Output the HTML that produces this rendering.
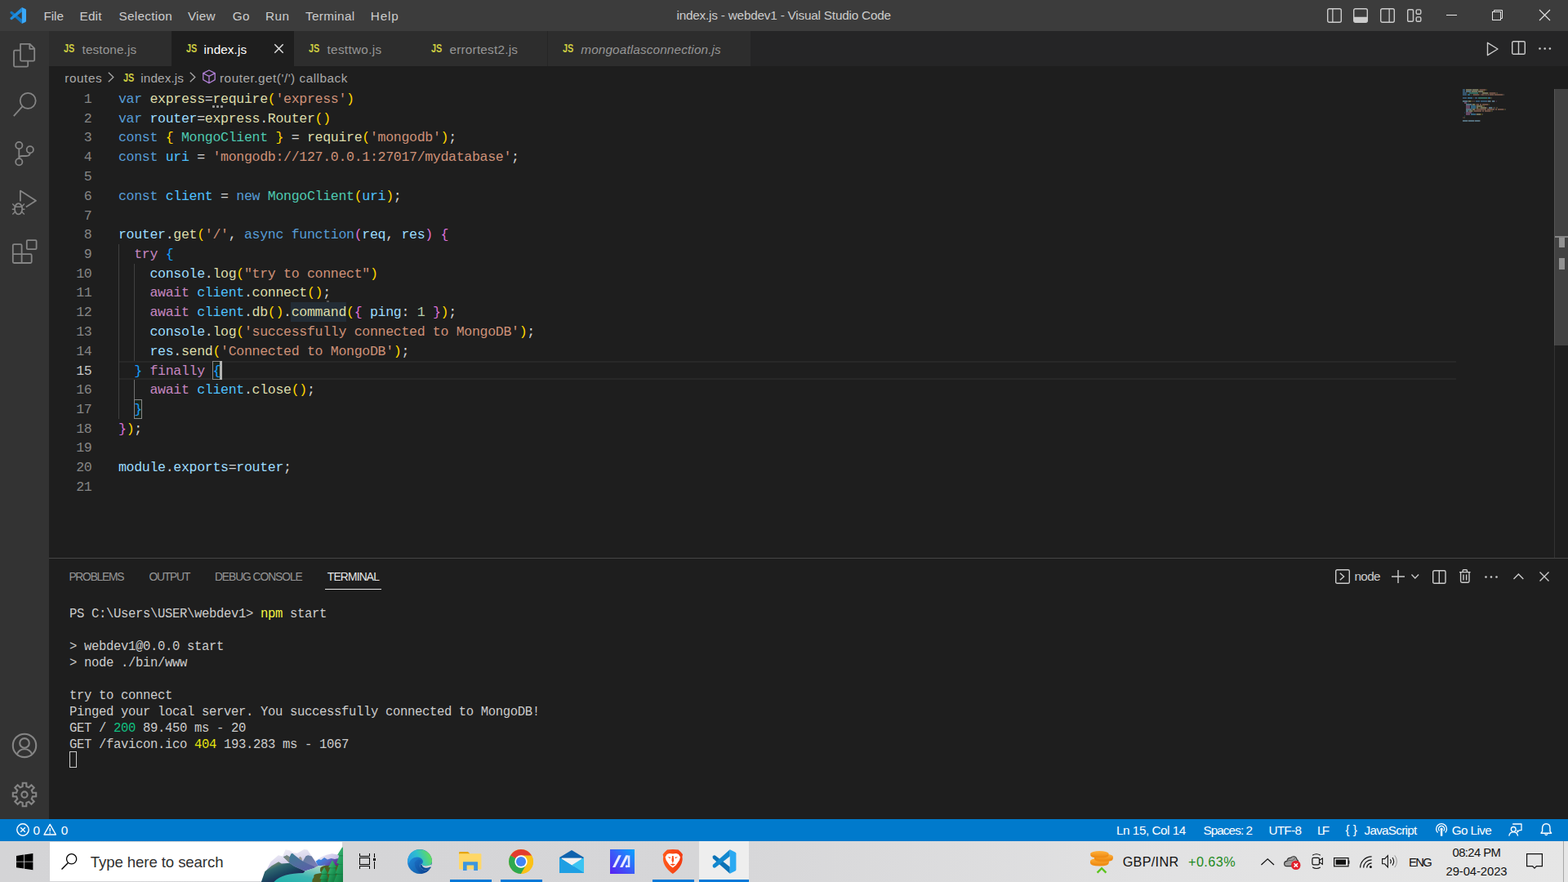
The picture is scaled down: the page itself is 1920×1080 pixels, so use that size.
<!DOCTYPE html>
<html lang="en">
<head>
<meta charset="utf-8">
<title>index.js - webdev1 - Visual Studio Code</title>
<style>
*{box-sizing:border-box;margin:0;padding:0}
html,body{width:1920px;height:1080px;overflow:hidden;background:#1e1e1e}
body{position:relative;font-family:"Liberation Sans",sans-serif;color:#ccc}
.abs{position:absolute}
.t{position:absolute;white-space:pre;display:block}
.js{font-size:14.2px;line-height:18px;font-weight:bold;color:#cbcb41;transform-origin:0 0}
svg{display:block;position:absolute;overflow:visible}
#titlebar{position:absolute;left:0;top:0;width:1920px;height:38px;background:#3c3c3c;color:#ccc}
#activity{position:absolute;left:0;top:38px;width:60px;height:965px;background:#333}
#tabs{position:absolute;left:0;top:0;width:1920px;height:81px;color:#969696}
#crumbs{position:absolute;left:0;top:0;width:1920px;height:109px;color:#a9a9a9}
#editor{position:absolute;left:0;top:0;width:1920px;height:684px}
.ln,.cl{position:absolute;height:24px;line-height:24px;font-family:"Liberation Mono",monospace;font-size:16.6px;letter-spacing:-0.337px;white-space:pre}
.ln{left:60px;width:52.4px;text-align:right;color:#858585}
.cl{left:145px;color:#d4d4d4}
.k{color:#569cd6}.c{color:#c586c0}.s{color:#ce9178}.v{color:#9cdcfe}.f{color:#dcdcaa}.y{color:#4ec9b0}.n{color:#b5cea8}.o{color:#4fc1ff}
.b1{color:#ffd700}.b2{color:#da70d6}.b3{color:#179fff}
#panel{position:absolute;left:0;top:0;width:1920px;height:1003px;color:#ccc}
.tl{position:absolute;left:85.1px;height:24px;line-height:24px;font-family:"Liberation Mono",monospace;font-size:15.6px;letter-spacing:-0.362px;color:#ccc;white-space:pre}
#status{position:absolute;left:0;top:1003px;width:1920px;height:27px;background:#007acc;color:#fff}
#taskbar{position:absolute;left:0;top:1030px;width:1920px;height:50px;background:linear-gradient(90deg,#d4d4d6 0,#d6d6d8 45%,#e2e2e3 75%,#e6e6e6 100%);color:#000}
</style>
</head>
<body>
<div id="editor">
<div class="abs" style="left:145px;top:442px;width:1638px;height:2px;background:#282828;"></div>
<div class="abs" style="left:145px;top:463px;width:1638px;height:2px;background:#282828;"></div>
<div class="abs" style="left:356px;top:370px;width:68px;height:24px;background:#232c35;"></div>
<div class="abs" style="left:400px;top:368px;width:3px;height:2px;background:#5a5a5a;"></div>
<div class="abs" style="left:145px;top:299px;width:1px;height:214px;background:#404040;"></div>
<div class="abs" style="left:164px;top:323px;width:1px;height:119px;background:#404040;"></div>
<div class="abs" style="left:164px;top:465px;width:1px;height:24px;background:#707070;"></div>
<div class="abs" style="left:260px;top:442px;width:12px;height:23px;background:#1b241b;border:1px solid #888;"></div>
<div class="abs" style="left:164px;top:489px;width:10px;height:24px;background:#1b241b;border:1px solid #888;"></div>
<div class="abs" style="left:269px;top:442px;width:3px;height:23px;background:#b4b4b2;"></div>
<div class="abs" style="left:260px;top:129px;width:3px;height:3px;background:#9c9c9c;border-radius:1px;"></div>
<div class="abs" style="left:265px;top:129px;width:3px;height:3px;background:#9c9c9c;border-radius:1px;"></div>
<div class="abs" style="left:270px;top:129px;width:3px;height:3px;background:#9c9c9c;border-radius:1px;"></div>
<div class="ln" style="top:110px">1</div>
<div class="cl" style="top:110px"><span class="k">var</span> <span class="f">express</span>=<span class="f">require</span><span class="b1">(</span><span class="s">'express'</span><span class="b1">)</span></div>
<div class="ln" style="top:134px">2</div>
<div class="cl" style="top:134px"><span class="k">var</span> <span class="v">router</span>=<span class="f">express</span>.<span class="f">Router</span><span class="b1">()</span></div>
<div class="ln" style="top:157px">3</div>
<div class="cl" style="top:157px"><span class="k">const</span> <span class="b1">{</span> <span class="y">MongoClient</span> <span class="b1">}</span> = <span class="f">require</span><span class="b1">(</span><span class="s">'mongodb'</span><span class="b1">)</span>;</div>
<div class="ln" style="top:181px">4</div>
<div class="cl" style="top:181px"><span class="k">const</span> <span class="o">uri</span> = <span class="s">'mongodb://127.0.0.1:27017/mydatabase'</span>;</div>
<div class="ln" style="top:205px">5</div>
<div class="ln" style="top:229px">6</div>
<div class="cl" style="top:229px"><span class="k">const</span> <span class="o">client</span> = <span class="k">new</span> <span class="y">MongoClient</span><span class="b1">(</span><span class="o">uri</span><span class="b1">)</span>;</div>
<div class="ln" style="top:253px">7</div>
<div class="ln" style="top:276px">8</div>
<div class="cl" style="top:276px"><span class="v">router</span>.<span class="f">get</span><span class="b1">(</span><span class="s">'/'</span>, <span class="k">async</span> <span class="k">function</span><span class="b2">(</span><span class="v">req</span>, <span class="v">res</span><span class="b2">)</span> <span class="b2">{</span></div>
<div class="ln" style="top:300px">9</div>
<div class="cl" style="top:300px">  <span class="c">try</span> <span class="b3">{</span></div>
<div class="ln" style="top:324px">10</div>
<div class="cl" style="top:324px">    <span class="v">console</span>.<span class="f">log</span><span class="b1">(</span><span class="s">"try to connect"</span><span class="b1">)</span></div>
<div class="ln" style="top:347px">11</div>
<div class="cl" style="top:347px">    <span class="c">await</span> <span class="o">client</span>.<span class="f">connect</span><span class="b1">()</span>;</div>
<div class="ln" style="top:371px">12</div>
<div class="cl" style="top:371px">    <span class="c">await</span> <span class="o">client</span>.<span class="f">db</span><span class="b1">()</span>.<span class="f">command</span><span class="b1">(</span><span class="b2">{</span> <span class="v">ping</span>: <span class="n">1</span> <span class="b2">}</span><span class="b1">)</span>;</div>
<div class="ln" style="top:395px">13</div>
<div class="cl" style="top:395px">    <span class="v">console</span>.<span class="f">log</span><span class="b1">(</span><span class="s">'successfully connected to MongoDB'</span><span class="b1">)</span>;</div>
<div class="ln" style="top:419px">14</div>
<div class="cl" style="top:419px">    <span class="v">res</span>.<span class="f">send</span><span class="b1">(</span><span class="s">'Connected to MongoDB'</span><span class="b1">)</span>;</div>
<div class="ln" style="top:443px;color:#c6c6c6">15</div>
<div class="cl" style="top:443px">  <span class="b3">}</span> <span class="c">finally</span> <span class="b3">{</span></div>
<div class="ln" style="top:466px">16</div>
<div class="cl" style="top:466px">    <span class="c">await</span> <span class="o">client</span>.<span class="f">close</span><span class="b1">()</span>;</div>
<div class="ln" style="top:490px">17</div>
<div class="cl" style="top:490px">  <span class="b3">}</span></div>
<div class="ln" style="top:514px">18</div>
<div class="cl" style="top:514px"><span class="b2">}</span><span class="b1">)</span>;</div>
<div class="ln" style="top:537px">19</div>
<div class="ln" style="top:561px">20</div>
<div class="cl" style="top:561px"><span class="v">module</span>.<span class="v">exports</span>=<span class="v">router</span>;</div>
<div class="ln" style="top:585px">21</div>
<svg style="left:1791px;top:109px;shape-rendering:crispEdges;" width="60" height="42" viewBox="0 0 60 42"><g opacity="0.42"><rect x="0" y="0" width="3" height="2" fill="#569cd6"/><rect x="4" y="0" width="7" height="2" fill="#dcdcaa"/><rect x="11" y="0" width="1" height="2" fill="#d4d4d4" opacity="0.4"/><rect x="12" y="0" width="7" height="2" fill="#dcdcaa"/><rect x="19" y="0" width="1" height="2" fill="#ffd700" opacity="0.4"/><rect x="20" y="0" width="1" height="2" fill="#ce9178" opacity="0.4"/><rect x="21" y="0" width="7" height="2" fill="#ce9178"/><rect x="28" y="0" width="1" height="2" fill="#ce9178" opacity="0.4"/><rect x="29" y="0" width="1" height="2" fill="#ffd700" opacity="0.4"/><rect x="0" y="2" width="3" height="2" fill="#569cd6"/><rect x="4" y="2" width="6" height="2" fill="#9cdcfe"/><rect x="10" y="2" width="1" height="2" fill="#d4d4d4" opacity="0.4"/><rect x="11" y="2" width="7" height="2" fill="#dcdcaa"/><rect x="18" y="2" width="1" height="2" fill="#d4d4d4" opacity="0.4"/><rect x="19" y="2" width="6" height="2" fill="#dcdcaa"/><rect x="25" y="2" width="2" height="2" fill="#ffd700" opacity="0.4"/><rect x="0" y="4" width="5" height="2" fill="#569cd6"/><rect x="6" y="4" width="1" height="2" fill="#ffd700" opacity="0.4"/><rect x="8" y="4" width="11" height="2" fill="#4ec9b0"/><rect x="20" y="4" width="1" height="2" fill="#ffd700" opacity="0.4"/><rect x="22" y="4" width="1" height="2" fill="#d4d4d4" opacity="0.4"/><rect x="24" y="4" width="7" height="2" fill="#dcdcaa"/><rect x="31" y="4" width="1" height="2" fill="#ffd700" opacity="0.4"/><rect x="32" y="4" width="1" height="2" fill="#ce9178" opacity="0.4"/><rect x="33" y="4" width="7" height="2" fill="#ce9178"/><rect x="40" y="4" width="1" height="2" fill="#ce9178" opacity="0.4"/><rect x="41" y="4" width="1" height="2" fill="#ffd700" opacity="0.4"/><rect x="42" y="4" width="1" height="2" fill="#d4d4d4" opacity="0.4"/><rect x="0" y="6" width="5" height="2" fill="#569cd6"/><rect x="6" y="6" width="3" height="2" fill="#4fc1ff"/><rect x="10" y="6" width="1" height="2" fill="#d4d4d4" opacity="0.4"/><rect x="12" y="6" width="1" height="2" fill="#ce9178" opacity="0.4"/><rect x="13" y="6" width="7" height="2" fill="#ce9178"/><rect x="20" y="6" width="3" height="2" fill="#ce9178" opacity="0.4"/><rect x="23" y="6" width="3" height="2" fill="#ce9178"/><rect x="26" y="6" width="1" height="2" fill="#ce9178" opacity="0.4"/><rect x="27" y="6" width="1" height="2" fill="#ce9178"/><rect x="28" y="6" width="1" height="2" fill="#ce9178" opacity="0.4"/><rect x="29" y="6" width="1" height="2" fill="#ce9178"/><rect x="30" y="6" width="1" height="2" fill="#ce9178" opacity="0.4"/><rect x="31" y="6" width="1" height="2" fill="#ce9178"/><rect x="32" y="6" width="1" height="2" fill="#ce9178" opacity="0.4"/><rect x="33" y="6" width="5" height="2" fill="#ce9178"/><rect x="38" y="6" width="1" height="2" fill="#ce9178" opacity="0.4"/><rect x="39" y="6" width="10" height="2" fill="#ce9178"/><rect x="49" y="6" width="1" height="2" fill="#ce9178" opacity="0.4"/><rect x="50" y="6" width="1" height="2" fill="#d4d4d4" opacity="0.4"/><rect x="0" y="10" width="5" height="2" fill="#569cd6"/><rect x="6" y="10" width="6" height="2" fill="#4fc1ff"/><rect x="13" y="10" width="1" height="2" fill="#d4d4d4" opacity="0.4"/><rect x="15" y="10" width="3" height="2" fill="#569cd6"/><rect x="19" y="10" width="11" height="2" fill="#4ec9b0"/><rect x="30" y="10" width="1" height="2" fill="#ffd700" opacity="0.4"/><rect x="31" y="10" width="3" height="2" fill="#4fc1ff"/><rect x="34" y="10" width="1" height="2" fill="#ffd700" opacity="0.4"/><rect x="35" y="10" width="1" height="2" fill="#d4d4d4" opacity="0.4"/><rect x="0" y="14" width="6" height="2" fill="#9cdcfe"/><rect x="6" y="14" width="1" height="2" fill="#d4d4d4" opacity="0.4"/><rect x="7" y="14" width="3" height="2" fill="#dcdcaa"/><rect x="10" y="14" width="1" height="2" fill="#ffd700" opacity="0.4"/><rect x="11" y="14" width="3" height="2" fill="#ce9178" opacity="0.4"/><rect x="14" y="14" width="1" height="2" fill="#d4d4d4" opacity="0.4"/><rect x="16" y="14" width="5" height="2" fill="#569cd6"/><rect x="22" y="14" width="8" height="2" fill="#569cd6"/><rect x="30" y="14" width="1" height="2" fill="#da70d6" opacity="0.4"/><rect x="31" y="14" width="3" height="2" fill="#9cdcfe"/><rect x="34" y="14" width="1" height="2" fill="#d4d4d4" opacity="0.4"/><rect x="36" y="14" width="3" height="2" fill="#9cdcfe"/><rect x="39" y="14" width="1" height="2" fill="#da70d6" opacity="0.4"/><rect x="41" y="14" width="1" height="2" fill="#da70d6" opacity="0.4"/><rect x="2" y="16" width="3" height="2" fill="#c586c0"/><rect x="6" y="16" width="1" height="2" fill="#179fff" opacity="0.4"/><rect x="4" y="18" width="7" height="2" fill="#9cdcfe"/><rect x="11" y="18" width="1" height="2" fill="#d4d4d4" opacity="0.4"/><rect x="12" y="18" width="3" height="2" fill="#dcdcaa"/><rect x="15" y="18" width="1" height="2" fill="#ffd700" opacity="0.4"/><rect x="16" y="18" width="1" height="2" fill="#ce9178" opacity="0.4"/><rect x="17" y="18" width="3" height="2" fill="#ce9178"/><rect x="21" y="18" width="2" height="2" fill="#ce9178"/><rect x="24" y="18" width="7" height="2" fill="#ce9178"/><rect x="31" y="18" width="1" height="2" fill="#ce9178" opacity="0.4"/><rect x="32" y="18" width="1" height="2" fill="#ffd700" opacity="0.4"/><rect x="4" y="20" width="5" height="2" fill="#c586c0"/><rect x="10" y="20" width="6" height="2" fill="#4fc1ff"/><rect x="16" y="20" width="1" height="2" fill="#d4d4d4" opacity="0.4"/><rect x="17" y="20" width="7" height="2" fill="#dcdcaa"/><rect x="24" y="20" width="2" height="2" fill="#ffd700" opacity="0.4"/><rect x="26" y="20" width="1" height="2" fill="#d4d4d4" opacity="0.4"/><rect x="4" y="22" width="5" height="2" fill="#c586c0"/><rect x="10" y="22" width="6" height="2" fill="#4fc1ff"/><rect x="16" y="22" width="1" height="2" fill="#d4d4d4" opacity="0.4"/><rect x="17" y="22" width="2" height="2" fill="#dcdcaa"/><rect x="19" y="22" width="2" height="2" fill="#ffd700" opacity="0.4"/><rect x="21" y="22" width="1" height="2" fill="#d4d4d4" opacity="0.4"/><rect x="22" y="22" width="7" height="2" fill="#dcdcaa"/><rect x="29" y="22" width="1" height="2" fill="#ffd700" opacity="0.4"/><rect x="30" y="22" width="1" height="2" fill="#da70d6" opacity="0.4"/><rect x="32" y="22" width="4" height="2" fill="#9cdcfe"/><rect x="36" y="22" width="1" height="2" fill="#d4d4d4" opacity="0.4"/><rect x="38" y="22" width="1" height="2" fill="#b5cea8"/><rect x="40" y="22" width="1" height="2" fill="#da70d6" opacity="0.4"/><rect x="41" y="22" width="1" height="2" fill="#ffd700" opacity="0.4"/><rect x="42" y="22" width="1" height="2" fill="#d4d4d4" opacity="0.4"/><rect x="4" y="24" width="7" height="2" fill="#9cdcfe"/><rect x="11" y="24" width="1" height="2" fill="#d4d4d4" opacity="0.4"/><rect x="12" y="24" width="3" height="2" fill="#dcdcaa"/><rect x="15" y="24" width="1" height="2" fill="#ffd700" opacity="0.4"/><rect x="16" y="24" width="1" height="2" fill="#ce9178" opacity="0.4"/><rect x="17" y="24" width="12" height="2" fill="#ce9178"/><rect x="30" y="24" width="9" height="2" fill="#ce9178"/><rect x="40" y="24" width="2" height="2" fill="#ce9178"/><rect x="43" y="24" width="7" height="2" fill="#ce9178"/><rect x="50" y="24" width="1" height="2" fill="#ce9178" opacity="0.4"/><rect x="51" y="24" width="1" height="2" fill="#ffd700" opacity="0.4"/><rect x="52" y="24" width="1" height="2" fill="#d4d4d4" opacity="0.4"/><rect x="4" y="26" width="3" height="2" fill="#9cdcfe"/><rect x="7" y="26" width="1" height="2" fill="#d4d4d4" opacity="0.4"/><rect x="8" y="26" width="4" height="2" fill="#dcdcaa"/><rect x="12" y="26" width="1" height="2" fill="#ffd700" opacity="0.4"/><rect x="13" y="26" width="1" height="2" fill="#ce9178" opacity="0.4"/><rect x="14" y="26" width="9" height="2" fill="#ce9178"/><rect x="24" y="26" width="2" height="2" fill="#ce9178"/><rect x="27" y="26" width="7" height="2" fill="#ce9178"/><rect x="34" y="26" width="1" height="2" fill="#ce9178" opacity="0.4"/><rect x="35" y="26" width="1" height="2" fill="#ffd700" opacity="0.4"/><rect x="36" y="26" width="1" height="2" fill="#d4d4d4" opacity="0.4"/><rect x="2" y="28" width="1" height="2" fill="#179fff" opacity="0.4"/><rect x="4" y="28" width="7" height="2" fill="#c586c0"/><rect x="12" y="28" width="1" height="2" fill="#179fff" opacity="0.4"/><rect x="4" y="30" width="5" height="2" fill="#c586c0"/><rect x="10" y="30" width="6" height="2" fill="#4fc1ff"/><rect x="16" y="30" width="1" height="2" fill="#d4d4d4" opacity="0.4"/><rect x="17" y="30" width="5" height="2" fill="#dcdcaa"/><rect x="22" y="30" width="2" height="2" fill="#ffd700" opacity="0.4"/><rect x="24" y="30" width="1" height="2" fill="#d4d4d4" opacity="0.4"/><rect x="2" y="32" width="1" height="2" fill="#179fff" opacity="0.4"/><rect x="0" y="34" width="1" height="2" fill="#da70d6" opacity="0.4"/><rect x="1" y="34" width="1" height="2" fill="#ffd700" opacity="0.4"/><rect x="2" y="34" width="1" height="2" fill="#d4d4d4" opacity="0.4"/><rect x="0" y="38" width="6" height="2" fill="#9cdcfe"/><rect x="6" y="38" width="1" height="2" fill="#d4d4d4" opacity="0.4"/><rect x="7" y="38" width="7" height="2" fill="#9cdcfe"/><rect x="14" y="38" width="1" height="2" fill="#d4d4d4" opacity="0.4"/><rect x="15" y="38" width="6" height="2" fill="#9cdcfe"/><rect x="21" y="38" width="1" height="2" fill="#d4d4d4" opacity="0.4"/></g></svg>
<div class="abs" style="left:1903px;top:109px;width:1px;height:575px;background:#333;"></div>
<div class="abs" style="left:1903px;top:109px;width:17px;height:314px;background:#424242;border-left:1px solid #555;"></div>
<div class="abs" style="left:1904px;top:289px;width:16px;height:2px;background:#868686;"></div>
<div class="abs" style="left:1909px;top:291px;width:7px;height:12px;background:#929292;"></div>
<div class="abs" style="left:1909px;top:316px;width:7px;height:14px;background:#929292;"></div>
</div>
<div id="tabs">
<div class="abs" style="left:60px;top:38px;width:1860px;height:43px;background:#252526;"></div>
<div class="abs" style="left:60px;top:38px;width:149.5px;height:43px;background:#2d2d2d;"></div>
<span class="t js" style="left:78.2px;top:50px;transform:scaleX(0.770)">JS</span>
<span class="t" style="left:100.5px;top:51px;font-size:15.3px;line-height:20px;letter-spacing:0.13px;color:#969696;">testone.js</span>
<div class="abs" style="left:210px;top:38px;width:149.5px;height:43px;background:#1e1e1e;"></div>
<span class="t js" style="left:228.2px;top:50px;transform:scaleX(0.770)">JS</span>
<span class="t" style="left:249.5px;top:51px;font-size:15.3px;line-height:20px;letter-spacing:0.11px;color:#fff;">index.js</span>
<div class="abs" style="left:360px;top:38px;width:149.5px;height:43px;background:#2d2d2d;"></div>
<span class="t js" style="left:378.2px;top:50px;transform:scaleX(0.770)">JS</span>
<span class="t" style="left:400.5px;top:51px;font-size:15.3px;line-height:20px;letter-spacing:0.32px;color:#969696;">testtwo.js</span>
<div class="abs" style="left:510px;top:38px;width:160px;height:43px;background:#2d2d2d;"></div>
<span class="t js" style="left:528.2px;top:50px;transform:scaleX(0.770)">JS</span>
<span class="t" style="left:550.5px;top:51px;font-size:15.3px;line-height:20px;letter-spacing:0.22px;color:#969696;">errortest2.js</span>
<div class="abs" style="left:671px;top:38px;width:248px;height:43px;background:#2d2d2d;"></div>
<span class="t js" style="left:689.2px;top:50px;transform:scaleX(0.770)">JS</span>
<span class="t" style="left:711.3px;top:51px;font-size:15.3px;line-height:20px;letter-spacing:0.14px;color:#969696;font-style:italic;">mongoatlasconnection.js</span>
<svg style="left:336px;top:54px;" width="11" height="11" viewBox="0 0 11 11"><path d="M0.3 0.3 L10.7 10.7 M10.7 0.3 L0.3 10.7" fill="none" stroke="#e0e0e0" stroke-width="1.5"/></svg>
<svg style="left:1819.5px;top:50.5px;" width="16" height="18" viewBox="0 0 16 18"><path d="M1.5 1.3 L14 9 L1.5 16.7 Z" fill="none" stroke="#ccc" stroke-width="1.4" stroke-linejoin="round"/></svg>
<svg style="left:1851px;top:50px;" width="17" height="17" viewBox="0 0 17 17"><rect x="0.7" y="0.7" width="15.6" height="15.6" rx="1.6" fill="none" stroke="#ccc" stroke-width="1.4"/><rect x="7.8" y="1" width="1.4" height="15" fill="#ccc"/></svg>
<svg style="left:1884px;top:58px;" width="16" height="3" viewBox="0 0 16 3"><circle cx="1.5" cy="1.5" r="1.3" fill="#ccc"/><circle cx="7.7" cy="1.5" r="1.3" fill="#ccc"/><circle cx="13.9" cy="1.5" r="1.3" fill="#ccc"/></svg>
</div>
<div id="crumbs">
<span class="t" style="left:79.3px;top:86px;font-size:15.3px;line-height:20px;letter-spacing:0.57px;color:#a9a9a9;">routes</span>
<svg style="left:131.8px;top:88.2px;" width="8" height="13" viewBox="0 0 8 13"><path d="M0.8 0.8 L6.8 6.5 L0.8 12.2" fill="none" stroke="#a9a9a9" stroke-width="1.3"/></svg>
<span class="t js" style="left:151.4px;top:86px;transform:scaleX(0.770)">JS</span>
<span class="t" style="left:172.3px;top:86px;font-size:15.3px;line-height:20px;letter-spacing:0.11px;color:#a9a9a9;">index.js</span>
<svg style="left:232.2px;top:88.2px;" width="8" height="13" viewBox="0 0 8 13"><path d="M0.8 0.8 L6.8 6.5 L0.8 12.2" fill="none" stroke="#a9a9a9" stroke-width="1.3"/></svg>
<svg style="left:248px;top:85px;" width="16" height="18" viewBox="0 0 16 18"><path d="M8 1 L15.2 4.6 V12.6 L8 16.8 L0.8 12.6 V4.6 Z M0.8 4.6 L8 8.4 L15.2 4.6 M8 8.4 V16.8" fill="none" stroke="#b180d7" stroke-width="1.3" stroke-linejoin="round"/></svg>
<span class="t" style="left:269px;top:86px;font-size:15.3px;line-height:20px;letter-spacing:0.52px;color:#a9a9a9;">router.get('/') callback</span>
</div>
<div id="panel">
<div class="abs" style="left:60px;top:683px;width:1860px;height:1px;background:#454545;"></div>
<span class="t" style="left:84.4px;top:698px;font-size:13.8px;line-height:18px;letter-spacing:-1.22px;color:#969696;">PROBLEMS</span>
<span class="t" style="left:182.5px;top:698px;font-size:13.8px;line-height:18px;letter-spacing:-1.18px;color:#969696;">OUTPUT</span>
<span class="t" style="left:262.9px;top:698px;font-size:13.8px;line-height:18px;letter-spacing:-1.04px;color:#969696;">DEBUG CONSOLE</span>
<span class="t" style="left:400.8px;top:698px;font-size:13.8px;line-height:18px;letter-spacing:-0.81px;color:#e7e7e7;">TERMINAL</span>
<div class="abs" style="left:398px;top:721px;width:69px;height:1px;background:#e7e7e7;"></div>
<svg style="left:1635px;top:697px;" width="18" height="18" viewBox="0 0 18 18"><rect x="0.7" y="0.7" width="16.6" height="16.6" rx="1.6" fill="none" stroke="#ccc" stroke-width="1.4"/><path d="M5.8 4.8 L10.6 9 L5.8 13.2" fill="none" stroke="#ccc" stroke-width="1.4"/></svg>
<span class="t" style="left:1658.4px;top:696px;font-size:15.3px;line-height:20px;letter-spacing:-0.64px;color:#ccc;">node</span>
<svg style="left:1704px;top:698px;" width="16" height="16" viewBox="0 0 16 16"><path d="M8 0 V16 M0 8 H16" fill="none" stroke="#ccc" stroke-width="1.4"/></svg>
<svg style="left:1727.8px;top:703px;" width="10" height="6" viewBox="0 0 10 6"><path d="M0.5 0.5 L4.8 5 L9.1 0.5" fill="none" stroke="#ccc" stroke-width="1.3"/></svg>
<svg style="left:1753.7px;top:697.5px;" width="17" height="17" viewBox="0 0 17 17"><rect x="0.7" y="0.7" width="15.3" height="15.6" rx="1.6" fill="none" stroke="#ccc" stroke-width="1.4"/><rect x="7.6" y="1" width="1.4" height="15" fill="#ccc"/></svg>
<svg style="left:1786.5px;top:697px;" width="14" height="17" viewBox="0 0 14 17"><path d="M0 3.6 H13.6 M4.2 3.4 V1.6 Q4.2 0.7 5.1 0.7 H8.5 Q9.4 0.7 9.4 1.6 V3.4 M1.6 4 V14.6 Q1.6 16.2 3.2 16.2 H10.4 Q12 16.2 12 14.6 V4 M5 6.5 V13.5 M8.6 6.5 V13.5" fill="none" stroke="#ccc" stroke-width="1.4"/></svg>
<svg style="left:1818.4px;top:704.5px;" width="16" height="3" viewBox="0 0 16 3"><circle cx="1.5" cy="1.5" r="1.3" fill="#ccc"/><circle cx="8" cy="1.5" r="1.3" fill="#ccc"/><circle cx="14.5" cy="1.5" r="1.3" fill="#ccc"/></svg>
<svg style="left:1852.5px;top:701.5px;" width="13" height="8" viewBox="0 0 13 8"><path d="M0.5 7 L6.4 1 L12.3 7" fill="none" stroke="#ccc" stroke-width="1.4"/></svg>
<svg style="left:1885.3px;top:700px;" width="12" height="12" viewBox="0 0 12 12"><path d="M0.5 0.5 L11.5 11.5 M11.5 0.5 L0.5 11.5" fill="none" stroke="#ccc" stroke-width="1.4"/></svg>
<div class="tl" style="top:740px">PS C:\Users\USER\webdev1&gt; <span style="color:#f5f543">npm</span> start</div>
<div class="tl" style="top:780px">&gt; webdev1@0.0.0 start</div>
<div class="tl" style="top:800px">&gt; node ./bin/www</div>
<div class="tl" style="top:840px">try to connect</div>
<div class="tl" style="top:860px">Pinged your local server. You successfully connected to MongoDB!</div>
<div class="tl" style="top:880px">GET / <span style="color:#11c081">200</span> 89.450 ms - 20</div>
<div class="tl" style="top:900px">GET /favicon.ico <span style="color:#e5e510">404</span> 193.283 ms - 1067</div>
<div class="abs" style="left:85px;top:920px;width:9px;height:20px;background:transparent;border:1px solid #ccc;"></div>
</div>
<div id="titlebar">
<svg style="left:12px;top:9px;" width="20" height="20" viewBox="0 0 100 100"><path d="M74 100 L74 72 L14 25 Q8 21 3.5 27 Q-0.5 33 4.5 38 Z" fill="#1276c4"/><path d="M74 0 L74 28 L14 75 Q8 79 3.5 73 Q-0.5 67 4.5 62 Z" fill="#1f8de0"/><path d="M74 0 L96 10.5 Q100 12.5 100 17 V83 Q100 87.5 96 89.5 L74 100 Z" fill="#3aa8f8"/></svg>
<span class="t" style="left:53.4px;top:10px;font-size:15.3px;line-height:20px;letter-spacing:-0.01px;">File</span>
<span class="t" style="left:97.5px;top:10px;font-size:15.3px;line-height:20px;letter-spacing:0.2px;">Edit</span>
<span class="t" style="left:145.6px;top:10px;font-size:15.3px;line-height:20px;letter-spacing:0.27px;">Selection</span>
<span class="t" style="left:230px;top:10px;font-size:15.3px;line-height:20px;letter-spacing:0.19px;">View</span>
<span class="t" style="left:284.8px;top:10px;font-size:15.3px;line-height:20px;letter-spacing:0.3px;">Go</span>
<span class="t" style="left:325px;top:10px;font-size:15.3px;line-height:20px;letter-spacing:0.47px;">Run</span>
<span class="t" style="left:374px;top:10px;font-size:15.3px;line-height:20px;letter-spacing:0.33px;">Terminal</span>
<span class="t" style="left:453.8px;top:10px;font-size:15.3px;line-height:20px;letter-spacing:0.82px;">Help</span>
<span class="t" style="left:828.5px;top:9px;font-size:15.3px;line-height:20px;letter-spacing:-0.2px;">index.js - webdev1 - Visual Studio Code</span>
<svg style="left:1625px;top:10px;" width="18" height="18" viewBox="0 0 18 18"><rect x="0.7" y="0.7" width="16.6" height="16.6" rx="2" fill="none" stroke="#ccc" stroke-width="1.4"/><rect x="6.2" y="1" width="1.3" height="16" fill="#ccc"/></svg>
<svg style="left:1657.3px;top:10px;" width="18" height="18" viewBox="0 0 18 18"><rect x="0.7" y="0.7" width="16.6" height="16.6" rx="2" fill="none" stroke="#ccc" stroke-width="1.4"/><path d="M1 10.8 H17 V15.5 Q17 17 15.5 17 H2.5 Q1 17 1 15.5 Z" fill="#ccc"/></svg>
<svg style="left:1690px;top:10px;" width="18" height="18" viewBox="0 0 18 18"><rect x="0.7" y="0.7" width="16.6" height="16.6" rx="2" fill="none" stroke="#ccc" stroke-width="1.4"/><rect x="10.5" y="1" width="1.3" height="16" fill="#ccc"/></svg>
<svg style="left:1723.2px;top:10px;" width="18" height="18" viewBox="0 0 18 18"><rect x="0.7" y="1.7" width="6.8" height="14.6" rx="1.4" fill="none" stroke="#ccc" stroke-width="1.4"/><rect x="11.2" y="1.9" width="5.6" height="5.4" rx="1.4" fill="none" stroke="#ccc" stroke-width="1.4"/><rect x="11.2" y="10.9" width="5.6" height="5.4" rx="1.4" fill="none" stroke="#ccc" stroke-width="1.4"/></svg>
<div class="abs" style="left:1771px;top:18px;width:13px;height:1px;background:#e6e6e6;"></div>
<svg style="left:1827px;top:12px;" width="14" height="14" viewBox="0 0 14 14"><rect x="0.5" y="2.5" width="10" height="10" fill="none" stroke="#e6e6e6" stroke-width="1"/><path d="M2.5 2.5 V0.5 H12.5 V10.5 H10.5" fill="none" stroke="#e6e6e6" stroke-width="1"/></svg>
<svg style="left:1885px;top:12px;" width="13" height="13" viewBox="0 0 13 13"><path d="M0 0 L13 13 M13 0 L0 13" fill="none" stroke="#e6e6e6" stroke-width="1.1"/></svg>
</div>
<div id="activity">
<svg style="left:0;top:-38px" width="60" height="1003" viewBox="0 0 60 1003" fill="none" stroke="#858585" stroke-width="1.8" stroke-linejoin="round" stroke-linecap="butt"><path d="M25 53.9 H36.6 L42.2 59.5 V73.2 Q42.2 74.7 40.7 74.7 H26.5 Q25 74.7 25 73.2 Z"/><path d="M36.3 54.2 V59.8 H41.9"/><path d="M25 61.7 H18.5 Q17 61.7 17 63.2 V80.2 Q17 81.7 18.5 81.7 H32.7 Q34.2 81.7 34.2 80.2 V75"/><circle cx="34.2" cy="123.3" r="9.5"/><path d="M27.6 130.2 L16.8 142.2"/><circle cx="23.3" cy="178" r="4.1"/><circle cx="23.3" cy="198.2" r="4.1"/><circle cx="36.8" cy="183.2" r="4.1"/><path d="M23.3 182.1 V194.1 M36.8 187.3 Q36.8 191 32 191 H27 Q23.3 191 23.3 194.1"/><path d="M24.9 246.5 V233.6 L44 245.8 L31.8 253.6"/><ellipse cx="22.6" cy="255.8" rx="4.6" ry="6.6"/><path d="M18.2 253.2 H27 M18 252.5 L15.3 249.6 M27.2 252.5 L29.9 249.6 M18 256.3 H14.8 M27.2 256.3 H30.4 M18.4 259.6 L15.3 262.6 M26.8 259.6 L29.9 262.6" stroke-width="1.4"/><path d="M15.8 300.6 Q15.8 299.1 17.3 299.1 H25.1 Q26.6 299.1 26.6 300.6 V311.2 H37.2 Q38.7 311.2 38.7 312.7 V320.5 Q38.7 322 37.2 322 H17.3 Q15.8 322 15.8 320.5 Z"/><path d="M15.8 311.2 H26.6 V322"/><rect x="32.8" y="294.1" width="11.8" height="11" rx="1.2"/><g stroke-width="2.1"><circle cx="30" cy="912.9" r="14.2"/><circle cx="30" cy="909.9" r="5.8"/><path d="M20.9 923.4 Q23.5 917.2 30 917.2 Q36.5 917.2 39.1 923.4"/></g><path d="M27.6 963.1 L27.7 958.8 L32.3 958.8 L32.4 963.1 L35.3 964.3 L38.4 961.3 L41.7 964.6 L38.7 967.7 L39.9 970.6 L44.2 970.7 L44.2 975.3 L39.9 975.4 L38.7 978.3 L41.7 981.4 L38.4 984.7 L35.3 981.7 L32.4 982.9 L32.3 987.2 L27.7 987.2 L27.6 982.9 L24.7 981.7 L21.6 984.7 L18.3 981.4 L21.3 978.3 L20.1 975.4 L15.8 975.3 L15.8 970.7 L20.1 970.6 L21.3 967.7 L18.3 964.6 L21.6 961.3 L24.7 964.3 Z" stroke-linejoin="miter" stroke-width="2.1"/><circle cx="30" cy="973" r="3.6" stroke-width="2.1"/></svg>
</div>
<div id="status">
<svg style="left:19.8px;top:5px;" width="16" height="16" viewBox="0 0 16 16"><circle cx="8" cy="8" r="7.2" fill="none" stroke="#fff" stroke-width="1.4"/><path d="M5.2 5.2 L10.8 10.8 M10.8 5.2 L5.2 10.8" stroke="#fff" stroke-width="1.4" fill="none"/></svg>
<span class="t" style="left:40.6px;top:4px;font-size:15.3px;line-height:20px;color:#fff;">0</span>
<svg style="left:53.3px;top:5px;" width="17" height="15" viewBox="0 0 17 15"><path d="M8.2 1.4 L15.4 14 H1 Z" fill="none" stroke="#fff" stroke-width="1.4" stroke-linejoin="round"/><path d="M8.2 6 V10.2 M8.2 11.3 V12.7" stroke="#fff" stroke-width="1.3"/></svg>
<span class="t" style="left:74.8px;top:4px;font-size:15.3px;line-height:20px;color:#fff;">0</span>
<span class="t" style="left:1367px;top:4px;font-size:15.3px;line-height:20px;letter-spacing:-0.47px;color:#fff;">Ln 15, Col 14</span>
<span class="t" style="left:1473.4px;top:4px;font-size:15.3px;line-height:20px;letter-spacing:-0.92px;color:#fff;">Spaces: 2</span>
<span class="t" style="left:1553.4px;top:4px;font-size:15.3px;line-height:20px;letter-spacing:-0.71px;color:#fff;">UTF-8</span>
<span class="t" style="left:1613px;top:4px;font-size:15.3px;line-height:20px;letter-spacing:-2.71px;color:#fff;">LF</span>
<span class="t" style="left:1670.5px;top:4px;font-size:15.3px;line-height:20px;letter-spacing:-0.74px;color:#fff;">JavaScript</span>
<span class="t" style="left:1777.7px;top:4px;font-size:15.3px;line-height:20px;letter-spacing:-0.59px;color:#fff;">Go Live</span>
<span class="t" style="left:1647.6px;top:3px;font-size:15.3px;line-height:20px;letter-spacing:4.09px;color:#fff;">{}</span>
<svg style="left:1757.7px;top:5.1px;" width="15" height="16" viewBox="0 0 15 16"><path d="M2.57 11.53 A6.4 6.4 0 1 1 11.63 11.53 M4.55 9.55 A3.6 3.6 0 1 1 9.65 9.55" fill="none" stroke="#fff" stroke-width="1.3"/><circle cx="7.1" cy="7" r="1.6" fill="#fff"/><rect x="5.9" y="7" width="2.4" height="8.7" fill="#fff"/></svg>
<svg style="left:1847.2px;top:5.3px;" width="17" height="16" viewBox="0 0 17 16"><path d="M5.2 1 H16 V8.6 H13.4 L11 11 V8.6" fill="none" stroke="#fff" stroke-width="1.3" stroke-linejoin="round"/><circle cx="6.2" cy="7.4" r="2.9" fill="none" stroke="#fff" stroke-width="1.3"/><path d="M0.8 15.6 Q1.4 10.8 6.2 10.8 Q11 10.8 11.6 15.6" fill="none" stroke="#fff" stroke-width="1.3"/></svg>
<svg style="left:1885.6px;top:5.3px;" width="15" height="16" viewBox="0 0 15 16"><path d="M1 12.2 H13.6 L12 9.8 V6.2 Q12 0.8 7.3 0.8 Q2.6 0.8 2.6 6.2 V9.8 Z" fill="none" stroke="#fff" stroke-width="1.4" stroke-linejoin="round"/><path d="M5.6 13.4 Q7.3 15.6 9 13.4" fill="none" stroke="#fff" stroke-width="1.3"/></svg>
</div>
<div id="taskbar">
<div class="abs" style="left:856px;top:0px;width:61px;height:50px;background:#eeeeee;"></div>
<svg style="left:19.8px;top:15px;" width="20.4" height="20.2" viewBox="0 0 20.4 20.2"><path d="M0 2.9 L9.2 1.6 V9.7 H0 Z M10 1.5 L20.4 0 V9.7 H10 Z M0 10.4 H9.2 V18.6 L0 17.3 Z M10 10.4 H20.4 V20.2 L10 18.7 Z" fill="#000"/></svg>
<div id="search" class="abs" style="left:61px;top:1px;width:358px;height:48px;background:#fff;overflow:hidden">
</div>
<svg style="left:75.3px;top:15px;" width="20" height="20" viewBox="0 0 20 20"><circle cx="12.6" cy="6.8" r="6.1" fill="none" stroke="#000" stroke-width="1.3"/><path d="M8.4 11.4 L0.5 19.6" stroke="#000" stroke-width="1.4" fill="none"/></svg>
<span class="t" style="left:110.8px;top:14px;font-size:18.6px;line-height:24px;letter-spacing:-0.09px;color:#303030;">Type here to search</span>
<svg style="left:316px;top:2px;clip-path:inset(0 2px 0 0)" width="106" height="48" viewBox="0 0 1920 869"><defs>
<linearGradient id="gsnow" x1="0.2" y1="0" x2="0.7" y2="1"><stop offset="0" stop-color="#f3f1f6"/><stop offset="0.45" stop-color="#dcd9ee"/><stop offset="1" stop-color="#a9a3da"/></linearGradient>
<linearGradient id="gsnow2" x1="0" y1="0" x2="1" y2="0.3"><stop offset="0" stop-color="#f6f4fa"/><stop offset="1" stop-color="#c4bee6"/></linearGradient>
<linearGradient id="gmid" x1="0.1" y1="0" x2="0.9" y2="1"><stop offset="0" stop-color="#3a7f92"/><stop offset="0.5" stop-color="#4f6f9e"/><stop offset="1" stop-color="#5b5ca8"/></linearGradient>
<linearGradient id="gmid2" x1="0" y1="0" x2="0.6" y2="1"><stop offset="0" stop-color="#5f7c99"/><stop offset="1" stop-color="#7b7db8"/></linearGradient>
<linearGradient id="gfront" x1="0.15" y1="0.1" x2="0.75" y2="0.8"><stop offset="0" stop-color="#8b946e"/><stop offset="0.3" stop-color="#2f6670"/><stop offset="0.6" stop-color="#1c4a62"/><stop offset="1" stop-color="#1d1d50"/></linearGradient>
<linearGradient id="glake" x1="0.1" y1="1" x2="0.9" y2="0"><stop offset="0" stop-color="#1fb1ab"/><stop offset="0.45" stop-color="#3cb5b2"/><stop offset="1" stop-color="#b5dcc8"/></linearGradient>
<linearGradient id="gfar" x1="0" y1="0" x2="1" y2="0.4"><stop offset="0" stop-color="#2b97f5"/><stop offset="0.6" stop-color="#5568c0"/><stop offset="1" stop-color="#6a2790"/></linearGradient>
<linearGradient id="gtree" x1="0" y1="0" x2="1" y2="1"><stop offset="0" stop-color="#4fc285"/><stop offset="0.5" stop-color="#1f9a58"/><stop offset="1" stop-color="#0a6a34"/></linearGradient>
</defs>
<path d="M170 640 L280 420 L450 275 L545 300 L610 150 L700 168 L770 215 L870 232 L1020 143 L1095 152 L1175 275 L1265 405 L1330 505 L900 640 Z" fill="url(#gsnow)"/>
<path d="M1265 405 L1400 318 L1520 268 L1640 238 L1765 262 L1810 310 V420 H1280 Z" fill="url(#gsnow2)"/>
<path d="M1280 412 L1345 368 L1400 382 L1470 328 L1540 372 L1620 345 L1700 362 L1780 345 L1820 360 V510 H1330 Z" fill="url(#gfar)"/>
<path d="M1000 400 L1060 292 L1110 274 L1190 300 L1270 420 L1335 512 L1240 565 L1000 520 Z" fill="url(#gmid2)"/>
<path d="M560 312 L640 274 L700 310 L735 240 L765 235 L830 290 L900 345 L1000 410 L1120 470 L1260 530 L1240 565 L1040 625 L800 520 L690 440 Z" fill="url(#gmid)"/>
<path d="M560 312 L640 274 L700 310 L690 440 Z" fill="#8a8a78" opacity="0.75"/>
<path d="M900 345 L930 305 L965 330 L980 395 Z" fill="#8f8a7a" opacity="0.8"/>
<path d="M300 869 L560 690 L1000 640 L1060 620 L1240 562 L1335 510 L1490 500 L1420 869 Z" fill="url(#glake)"/>
<path d="M70 869 L150 640 L300 512 L455 420 L520 462 L590 456 L700 450 L800 520 L1045 628 L1000 672 C 700 682 500 720 350 869 Z" fill="url(#gfront)"/>
<path d="M1380 560 Q1400 520 1480 505 L1820 500 V869 H1200 Q1200 800 1240 760 Q1220 700 1300 690 L1400 670 Q1360 620 1380 560 Z" fill="#4f5f22"/>
<path d="M1470 545 L1545 680 L1515 685 L1555 800 L1520 805 L1545 869 H1385 L1405 805 L1365 800 L1420 685 L1385 680 Z" fill="url(#gtree)"/><path d="M1385 680 Q1470 700 1545 680 L1515 700 H1420 Z M1365 800 Q1460 825 1555 800 L1520 820 H1400 Z" fill="#0a5a2c" opacity="0.6"/>
<path d="M1650 385 L1740 545 L1705 550 L1755 690 L1715 695 L1760 869 H1545 L1585 695 L1545 690 L1600 550 L1560 545 Z" fill="url(#gtree)"/><path d="M1560 545 Q1650 570 1740 545 L1705 565 H1600 Z M1545 690 Q1650 715 1755 690 L1715 712 H1585 Z" fill="#0a5a2c" opacity="0.6"/>
<path d="M1870 90 L1960 270 L1930 275 L1990 460 L1950 465 L2000 680 L1960 685 L2000 869 H1680 L1750 685 L1715 680 L1790 465 L1740 455 L1800 275 L1760 265 Z" fill="url(#gtree)"/><path d="M1760 265 Q1860 295 1960 270 L1930 292 H1800 Z M1740 455 Q1860 490 1990 460 L1950 482 H1790 Z M1715 680 Q1860 710 2000 680 L1960 702 H1750 Z" fill="#0a5a2c" opacity="0.6"/></svg>
<svg style="left:440px;top:15px;" width="21" height="19" viewBox="0 0 21 19"><path d="M0.5 0 V3.5 H12.5 V0 M0.5 19 V15.5 H12.5 V19 M18.5 0 V5 M18.5 10 V19" stroke="#000" stroke-width="1" fill="none"/><rect x="0.5" y="5.5" width="12" height="8" fill="none" stroke="#000" stroke-width="1"/><rect x="17" y="6" width="3" height="3" fill="#000"/></svg>
<svg style="left:499px;top:10px;" width="30" height="30" viewBox="0 0 30 30"><defs><linearGradient id="e1" x1="0" y1="0" x2="1" y2="1"><stop offset="0" stop-color="#2493e4"/><stop offset="1" stop-color="#0d4f9c"/></linearGradient>
<linearGradient id="e2" x1="0" y1="0.6" x2="1" y2="0.3"><stop offset="0" stop-color="#2a9fe6"/><stop offset="0.45" stop-color="#2fc0cc"/><stop offset="1" stop-color="#6be14a"/></linearGradient>
<linearGradient id="e3" x1="0" y1="0" x2="1" y2="1"><stop offset="0" stop-color="#1a6fc4"/><stop offset="1" stop-color="#0b3f8c"/></linearGradient></defs>
<circle cx="15" cy="15" r="15" fill="url(#e1)"/>
<path d="M8.6 16 Q8.2 24 16.5 29.9 Q24 29.6 28.2 23 Q25.5 25.2 22 25.4 Q16 25.2 14.6 20 Q14 16.2 17 14 Q13 9.6 8.6 16 Z" fill="url(#e3)"/>
<path d="M0.2 13 Q1.5 5 8 1.8 Q14 -1 20 1 Q29.4 4.6 30 14 Q30.2 18 27.6 19.4 Q24 21 19.6 19.8 Q17.6 19 17.8 17.8 Q19.4 15.8 18.6 13.4 Q16.6 9.4 11.6 9.4 Q4.6 9.8 1.2 17.4 Q-0.2 15.4 0.2 13 Z" fill="url(#e2)"/>
<path d="M17.8 17.8 Q17.4 19.2 19.6 19.9 Q24 21 27.8 19.3 Q29.2 18.6 29.6 17.4 L29.4 21.2 Q28.8 22.6 28.2 23 Q25.4 25.2 22 25.4 Q18 25.2 16 22.4 Q15 20.4 16.2 18.6 Z" fill="#d6d6d8"/>
<path d="M16.2 18.6 Q15 20.4 16 22.4 Q18 25.2 22 25.4 Q25.4 25.2 28.2 23 Q29 22.2 28.6 21.6 Q28 21.2 27 21.8 Q24 23.2 21 22.4 Q17.6 21.4 17.6 18.6 Z" fill="#0d4a98"/></svg>
<svg style="left:562px;top:13px;" width="27.4" height="23" viewBox="0 0 27.4 23"><path d="M0 1.2 Q0 0 1.2 0 H11 L13 2 V4 H0 Z" fill="#e6a50a"/>
<rect x="0" y="2.2" width="27.4" height="19.4" rx="0.8" fill="#ffd767"/>
<path d="M5 12.2 H22.6 Q23 12.2 23 12.8 V23 H18.2 V16.6 H9.6 V23 H5 V12.8 Q5 12.2 5 12.2 Z" fill="#3c97de"/></svg>
<svg style="left:623.1px;top:9.8px;" width="30" height="30" viewBox="0 0 30 30"><circle cx="15" cy="15" r="15" fill="#fbc116"/>
<path d="M15 15 L2.01 7.5 A15 15 0 0 1 27.99 7.5 Z" fill="#e33b2e"/>
<path d="M15 15 L27.99 7.5 L15 7.5 Z" fill="#e33b2e"/>
<path d="M15 15 L2.01 7.5 A15 15 0 0 0 15 30 L21.5 18.75 Z" fill="#2da94f"/>
<path d="M15 15 L21.5 18.75 L15 30 A15 15 0 0 0 27.99 7.5 L15 7.5 Z" fill="#fbc116"/>
<circle cx="15" cy="15" r="7.7" fill="#fff"/><circle cx="15" cy="15" r="6.1" fill="#4285f4"/></svg>
<svg style="left:685px;top:11px;" width="30" height="28" viewBox="0 0 30 28"><path d="M0 9 L15 0 L30 9 V28 H0 Z" fill="#0f62ad"/>
<path d="M2.6 9.6 H27.4 V20 H2.6 Z" fill="#f2f2f2"/>
<path d="M0 9 L30 28 H0 Z" fill="#1e9fe3"/>
<path d="M30 9 V28 L15 18.4 Z" fill="#3cc4f2"/>
<path d="M0 9 L15 18.5 L30 28 H0 Z" fill="#1e9fe3"/></svg>
<svg style="left:747px;top:10px;" width="30" height="30" viewBox="0 0 30 30"><defs><linearGradient id="ma" x1="0" y1="1" x2="1" y2="0"><stop offset="0" stop-color="#5a1ff2"/><stop offset="0.5" stop-color="#3a5cf8"/><stop offset="1" stop-color="#05a6ff"/></linearGradient></defs>
<rect width="30" height="30" fill="url(#ma)"/>
<path d="M3 22 L10.4 7.2 H13.8 L6.4 22 Z" fill="#e9ecff"/>
<path d="M12 22 L19.4 7.2 H22.8 L15.4 22 Z" fill="#e9ecff"/>
<path d="M21.6 8.5 L24.3 7.2 V22 H22 Z" fill="#dfe4ff"/>
<circle cx="20.4" cy="20.8" r="1.5" fill="#fff"/></svg>
<svg style="left:811px;top:10px;" width="25.6" height="30" viewBox="0 0 25.6 30"><defs><linearGradient id="br" x1="0" y1="0" x2="1" y2="0"><stop offset="0" stop-color="#ff5a1c"/><stop offset="1" stop-color="#f23a12"/></linearGradient></defs>
<path d="M6 0.6 Q12.8 -0.6 19.6 0.6 L22.8 3.4 L25 6.2 L24.4 9 Q25.4 14 22.6 19.6 Q19.4 25.6 12.8 30 Q6.2 25.6 3 19.6 Q0.2 14 1.2 9 L0.6 6.2 L2.8 3.4 Z" fill="url(#br)"/>
<path d="M12.8 5.6 L17 5 L19.8 6 L22 9.6 L20.8 13.6 L18.2 17.2 L16.6 19.6 L12.8 22.6 L9 19.6 L7.4 17.2 L4.8 13.6 L3.6 9.6 L5.8 6 L8.6 5 Z" fill="#fff"/>
<path d="M6.6 9.2 L10.4 9.8 L9.2 11.2 Z M19 9.2 L15.2 9.8 L16.4 11.2 Z M11.4 13.6 L12.8 17 L14.2 13.6 L13.6 8 H12 Z M9.4 18.4 L12.8 17.4 L16.2 18.4 L12.8 20 Z" fill="#fb4a18"/></svg>
<svg style="left:871.6px;top:10px;" width="29.4" height="30" viewBox="0 0 100 100"><path d="M74 100 L74 72 L14 25 Q8 21 3.5 27 Q-0.5 33 4.5 38 Z" fill="#0b72b6"/>
<path d="M74 0 L74 28 L14 75 Q8 79 3.5 73 Q-0.5 67 4.5 62 Z" fill="#1288cf"/>
<path d="M74 0 L96 10.5 Q100 12.5 100 17 V83 Q100 87.5 96 89.5 L74 100 Z" fill="#2aa9f2"/></svg>
<div class="abs" style="left:551px;top:47px;width:51px;height:3px;background:#0078d7;"></div>
<div class="abs" style="left:613px;top:47px;width:51px;height:3px;background:#0078d7;"></div>
<div class="abs" style="left:799px;top:47px;width:51px;height:3px;background:#0078d7;"></div>
<div class="abs" style="left:856px;top:47px;width:61px;height:3px;background:#0078d7;"></div>
<svg style="left:1335px;top:12px;" width="28" height="28" viewBox="0 0 28 28"><defs><linearGradient id="cn" x1="0" y1="0" x2="0" y2="1"><stop offset="0" stop-color="#ffb03a"/><stop offset="1" stop-color="#f2921a"/></linearGradient></defs>
<path d="M0 12 V14.6 Q0 18.6 11.4 18.6 Q22.8 18.6 22.8 14.6 V12 Z" fill="#ef8d16"/><ellipse cx="11.4" cy="12.4" rx="11.4" ry="3.6" fill="url(#cn)"/>
<path d="M5 6.8 V9.4 Q5 13.2 16.4 13.2 Q27.8 13.2 27.8 9.4 V6.8 Z" fill="#ef8d16"/><ellipse cx="16.4" cy="7" rx="11.4" ry="3.4" fill="url(#cn)"/>
<path d="M0.4 2.8 V5.2 Q0.4 8.6 11.4 8.6 Q22.4 8.6 22.4 5.2 V2.8 Z" fill="#ef8d16"/><ellipse cx="11.4" cy="3.2" rx="11" ry="3.2" fill="url(#cn)"/>
<path d="M8.6 26.6 L14 21.2 L19.4 26.6" fill="none" stroke="#5cc41e" stroke-width="2.4" stroke-linejoin="miter"/></svg>
<span class="t" style="left:1374.7px;top:14px;font-size:16.2px;line-height:22px;letter-spacing:0.31px;color:#111;">GBP/INR</span>
<span class="t" style="left:1455px;top:14px;font-size:16.2px;line-height:22px;letter-spacing:0.45px;color:#1e8a22;">+0.63%</span>
<svg style="left:1544px;top:20.6px;" width="17" height="9" viewBox="0 0 17 9"><path d="M0.4 8 L8.2 0.7 L16 8" fill="none" stroke="#111" stroke-width="1.2"/></svg>
<svg style="left:1571.7px;top:18px;" width="21" height="18" viewBox="0 0 21 18"><path d="M3.6 12.6 Q0.5 12.4 0.6 9.4 Q0.8 6.6 3.8 6.4 Q4.6 2.2 8.6 2.4 Q10 0.4 12.6 0.8 Q15.6 1.4 16 4.6 Q17.8 5.4 17.6 7.4 L10 12.6 Z" fill="#a0a0a0" stroke="#333" stroke-width="1.1"/>
<path d="M4 6.6 Q7 4.6 10 6 L14 3" fill="none" stroke="#555" stroke-width="0.8"/>
<circle cx="14.8" cy="11.4" r="5.7" fill="#e3212d"/><path d="M12.6 9.2 L17 13.6 M17 9.2 L12.6 13.6" stroke="#fff" stroke-width="1.5" fill="none"/></svg>
<svg style="left:1605px;top:15.4px;" width="15" height="19" viewBox="0 0 15 19"><rect x="1.9" y="5.3" width="8.6" height="8.6" rx="1.6" fill="none" stroke="#111" stroke-width="1.2"/><path d="M10.6 8.2 L14.4 6 V13.2 L10.6 11 Z" fill="none" stroke="#111" stroke-width="1.1"/>
<path d="M2.2 2.2 Q7 -0.8 11.8 2.2 M2.2 17 Q7 20 11.8 17" fill="none" stroke="#111" stroke-width="1.1"/></svg>
<svg style="left:1632.8px;top:19.8px;" width="20" height="12" viewBox="0 0 20 12"><rect x="0.6" y="0.6" width="17.4" height="10.2" fill="none" stroke="#111" stroke-width="1.2"/><rect x="2.6" y="2.6" width="12.4" height="6.2" fill="#111"/><rect x="18" y="3.6" width="1.4" height="4.2" fill="#111"/></svg>
<svg style="left:1664.8px;top:17.6px;" width="16" height="16" viewBox="0 0 16 16"><path d="M0.6 14.6 A14 14 0 0 1 14.6 0.8 M4.6 14.6 A10 10 0 0 1 14.6 4.8 M8.6 14.6 A6 6 0 0 1 14.6 8.8" fill="none" stroke="#111" stroke-width="1.2"/><circle cx="13.4" cy="13.4" r="1.5" fill="#111"/></svg>
<svg style="left:1692px;top:16.2px;" width="20" height="18" viewBox="0 0 20 18"><path d="M0.6 5.6 H3.6 L7.4 1.6 V15.8 L3.6 11.8 H0.6 Z" fill="none" stroke="#111" stroke-width="1.1" stroke-linejoin="miter"/>
<path d="M10.4 6.2 Q12.2 8.8 10.4 11.4 M13 4 Q16.4 8.8 13 13.6" fill="none" stroke="#111" stroke-width="1.1"/><path d="M15.8 1.4 Q21 8.8 15.8 16.2" fill="none" stroke="#999" stroke-width="1"/></svg>
<span class="t" style="left:1725px;top:16px;font-size:14.8px;line-height:20px;letter-spacing:-1.63px;color:#111;">ENG</span>
<span class="t" style="left:1778.5px;top:4px;font-size:14.8px;line-height:20px;letter-spacing:-0.57px;color:#111;">08:24 PM</span>
<span class="t" style="left:1770.5px;top:27px;font-size:14.8px;line-height:20px;letter-spacing:-0.07px;color:#111;">29-04-2023</span>
<svg style="left:1869px;top:15.2px;" width="20" height="19" viewBox="0 0 20 19"><path d="M0.6 0.6 H19.4 V15.6 H12.4 L10 18.2 L7.6 15.6 H0.6 Z" fill="none" stroke="#111" stroke-width="1.2"/></svg>
<div class="abs" style="left:1914px;top:0px;width:1px;height:50px;background:#a8a8a8;"></div>
</div>
</body>
</html>
